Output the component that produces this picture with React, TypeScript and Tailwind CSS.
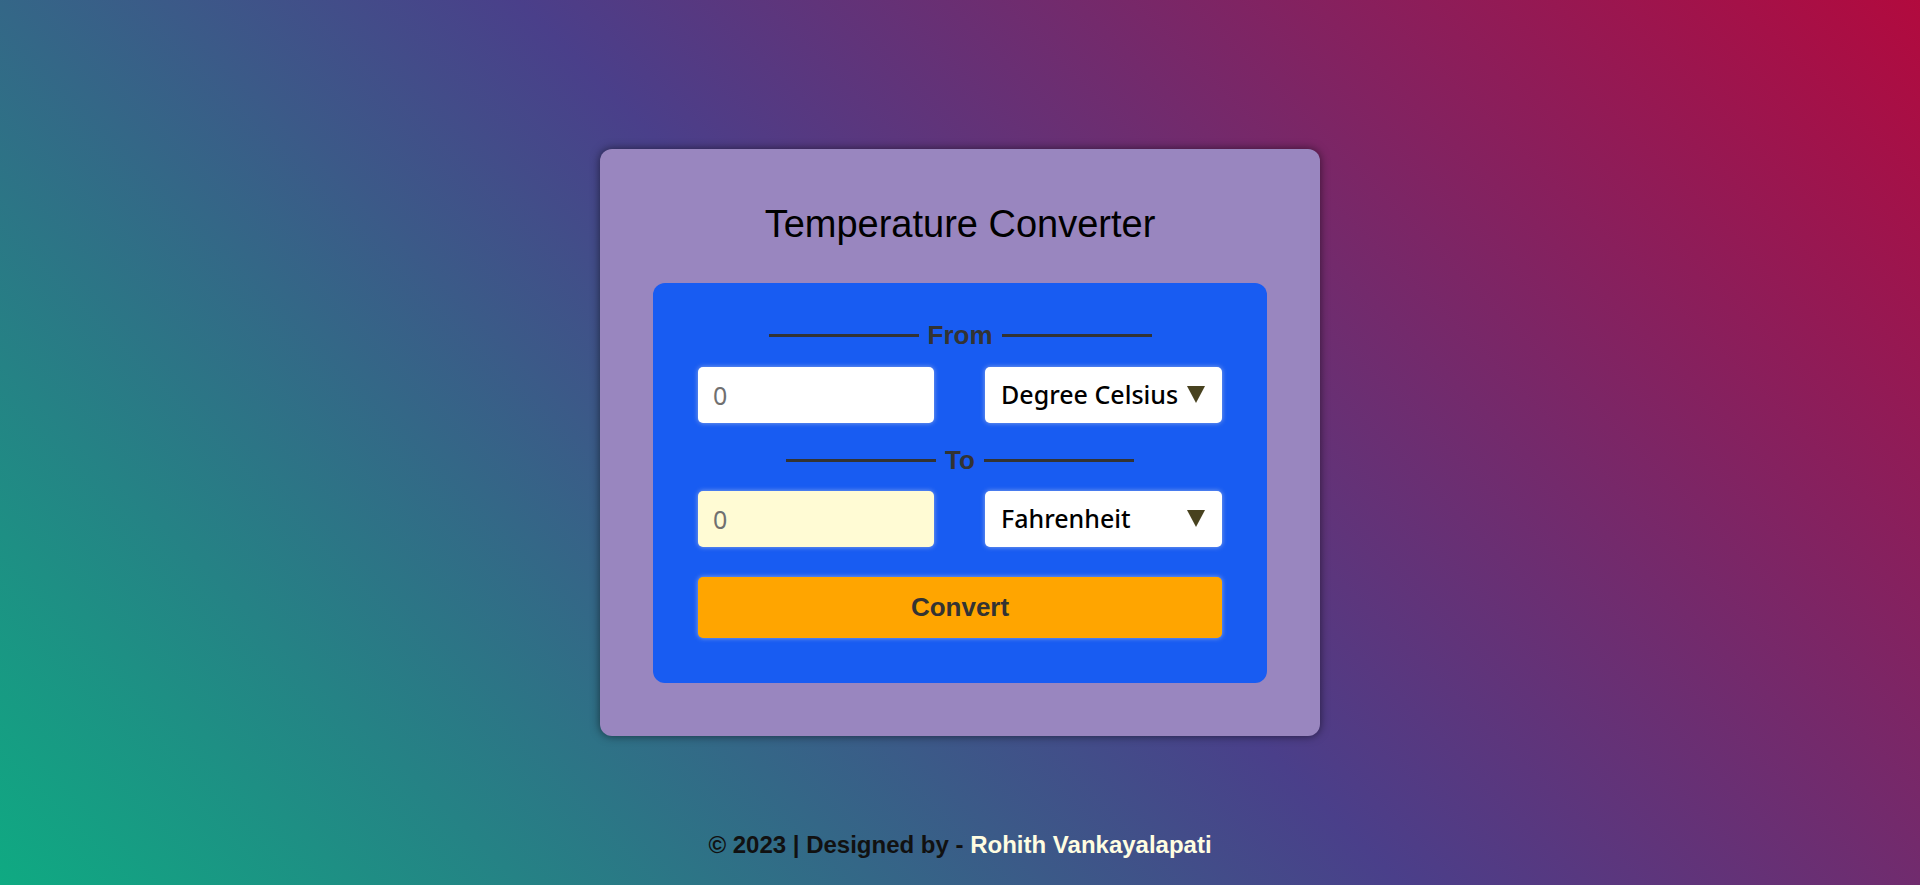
import React, { useState } from 'react';

type Unit = 'c' | 'f' | 'k';

const units: { value: Unit; label: string }[] = [
  { value: 'c', label: 'Degree Celsius' },
  { value: 'f', label: 'Fahrenheit' },
  { value: 'k', label: 'Kelvin' },
];

function toCelsius(v: number, u: Unit) {
  if (u === 'f') return ((v - 32) * 5) / 9;
  if (u === 'k') return v - 273.15;
  return v;
}

function fromCelsius(v: number, u: Unit) {
  if (u === 'f') return (v * 9) / 5 + 32;
  if (u === 'k') return v + 273.15;
  return v;
}

function Legend({ label }: { label: string }) {
  return (
    <div className="flex items-center justify-center gap-[9px]">
      <span className="h-[3px] w-[150px] bg-[#333]" />
      <span className="text-[26px] font-bold leading-[30px] text-[#333]">{label}</span>
      <span className="h-[3px] w-[150px] bg-[#333]" />
    </div>
  );
}

function UnitSelect({ value, onChange }: { value: Unit; onChange: (u: Unit) => void }) {
  return (
    <div className="relative h-[56px] w-[237px] rounded-[5px] bg-white shadow-[0_0_5px_rgba(190,200,230,0.7)]">
      <select
        value={value}
        onChange={(e) => onChange(e.target.value as Unit)}
        className="h-full w-full appearance-none rounded-[5px] bg-transparent pl-[16px] pr-[40px] font-['Noto_Sans',sans-serif] text-[25px] font-medium text-black outline-none"
      >
        {units.map((u) => (
          <option key={u.value} value={u.value}>
            {u.label}
          </option>
        ))}
      </select>
      {/* custom dropdown arrow */}
      <svg
        className="pointer-events-none absolute right-[17px] top-[19px]"
        width="18"
        height="17"
        viewBox="0 0 18 17"
      >
        <polygon points="0,0 18,0 9,17" fill="#48421f" />
      </svg>
    </div>
  );
}

export default function App() {
  const [input, setInput] = useState('');
  const [from, setFrom] = useState<Unit>('c');
  const [to, setTo] = useState<Unit>('f');
  const [result, setResult] = useState('');

  const convert = () => {
    const n = parseFloat(input);
    if (isNaN(n)) return setResult('');
    const out = fromCelsius(toCelsius(n, from), to);
    setResult(String(Math.round(out * 100) / 100));
  };

  return (
    <div className="flex min-h-screen flex-col items-center bg-[linear-gradient(45deg,#0faa82,#4a3f8a,#b20a3e)] font-['Liberation_Sans',Arial,sans-serif]">
      <div className="mt-[149px] w-[720px] rounded-[12px] bg-[#9986bf] px-[53px] pb-[53px] pt-[53px] shadow-[0_0_10px_rgba(0,0,0,0.55)]">
        <h1 className="text-center text-[38px] font-normal leading-[44px] text-black">Temperature Converter</h1>

        <div className="mt-[37px] rounded-[12px] bg-[#185cf2] px-[45px] pb-[45px] pt-[37px]">
          <Legend label="From" />
          <div className="mt-[17px] flex justify-between">
            <input
              type="number"
              placeholder="0"
              value={input}
              onChange={(e) => setInput(e.target.value)}
              className="h-[56px] w-[236px] rounded-[5px] bg-white px-[15px] font-['Noto_Sans',sans-serif] text-[25px] text-black outline-none shadow-[0_0_5px_rgba(190,200,230,0.7)] placeholder:text-[#707070]"
            />
            <UnitSelect value={from} onChange={setFrom} />
          </div>

          <div className="mt-[22px]">
            <Legend label="To" />
          </div>
          <div className="mt-[16px] flex justify-between">
            <input
              type="text"
              placeholder="0"
              readOnly
              value={result}
              className="h-[56px] w-[236px] rounded-[5px] bg-[#fffbd4] px-[15px] font-['Noto_Sans',sans-serif] text-[25px] text-black outline-none shadow-[0_0_5px_rgba(190,200,230,0.7)] placeholder:text-[#707070]"
            />
            <UnitSelect value={to} onChange={setTo} />
          </div>

          <button
            onClick={convert}
            className="mt-[30px] h-[61px] w-full rounded-[5px] bg-[#ffa500] text-[26px] font-bold text-[#333] shadow-[0_0_5px_rgba(190,200,230,0.7)]"
          >
            Convert
          </button>
        </div>
      </div>

      <footer className="mt-[95px] text-[24px] font-bold leading-[28px] text-[#111]">
        © 2023 | Designed by - <span className="text-[#fffde1]">Rohith Vankayalapati</span>
      </footer>
    </div>
  );
}
